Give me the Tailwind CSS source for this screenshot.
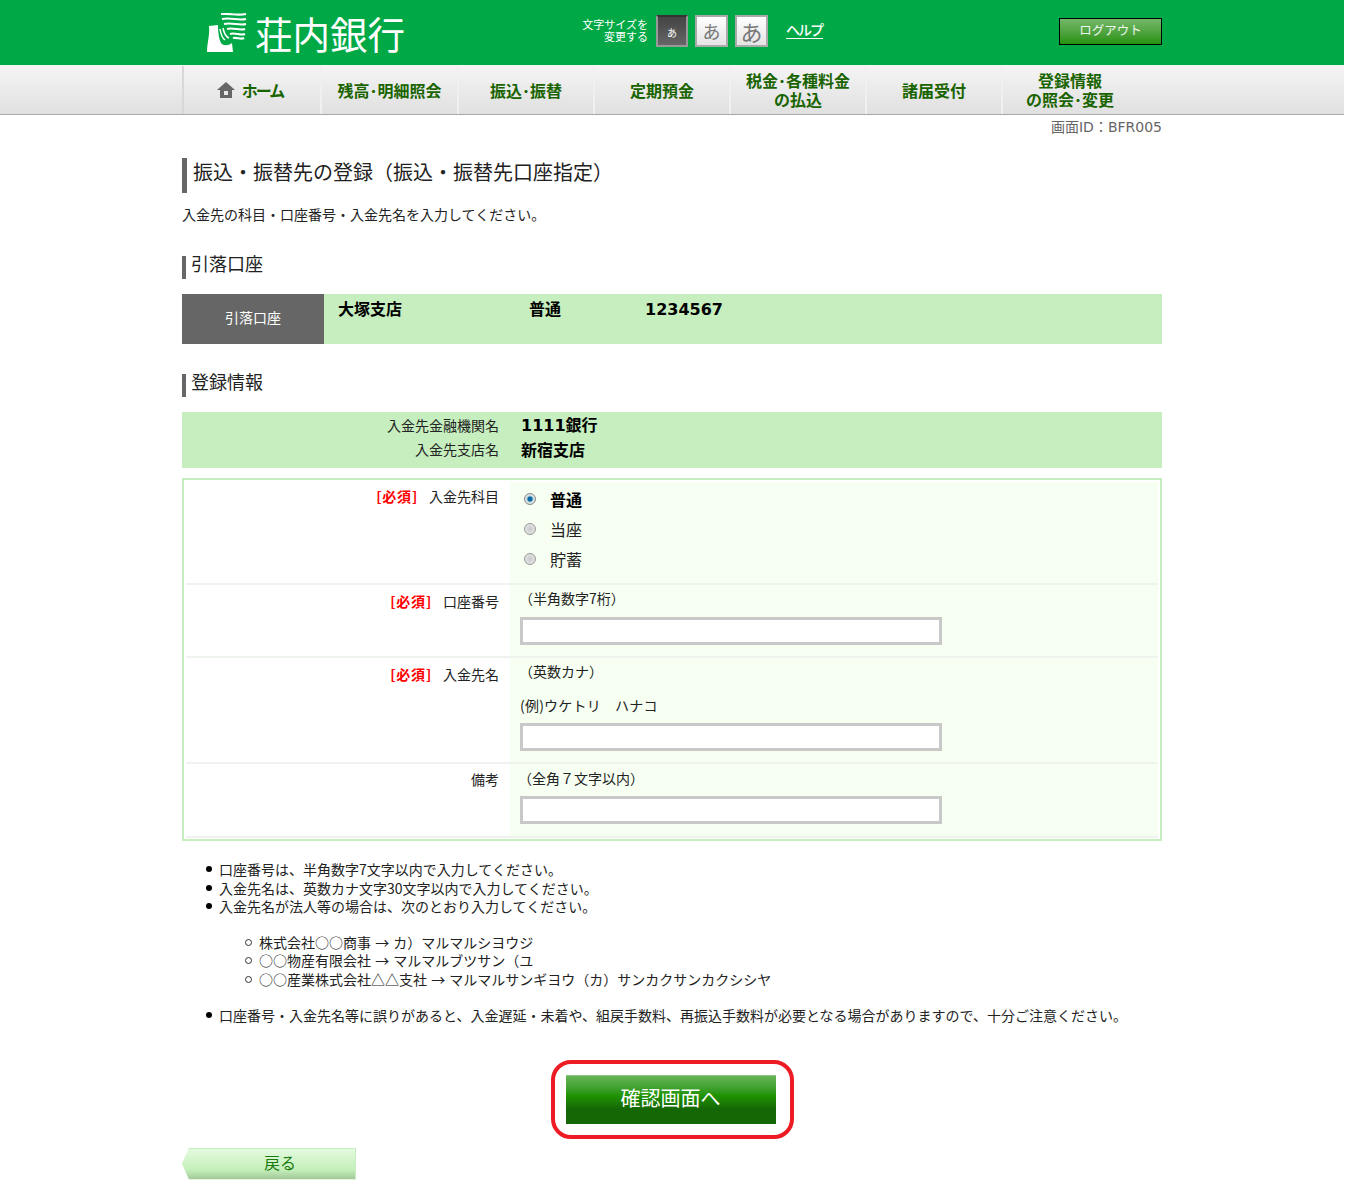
<!DOCTYPE html>
<html lang="ja">
<head>
    <meta charset="UTF-8">
    <title>荘内銀行 振込・振替先の登録</title>
    <script src="https://cdn.jsdelivr.net/npm/@tailwindcss/browser@4"></script>
</head>
<body class="bg-white w-[1344px] text-[#222] font-['Noto_Sans_CJK_JP','Noto_Sans',sans-serif] text-[14px] leading-[20px]">
    <!-- ヘッダー -->
    <header class="bg-[#00a946] h-[65px]">
        <div class="w-[980px] mx-auto flex relative h-full">
            <div class="flex w-[400px] pl-[25px] pt-[13px]">
                <svg class="w-[40px] h-[40px]" viewBox="0 0 40 40" fill="none">
                    <path d="M2 13 L11 12 C11 20 12 26 14 30 C16 33 21 33 25 30 L26 39 L0 39 C0 30 3 22 2 13 Z" fill="#fff"/>
                    <g stroke="#fff" stroke-width="1.5" fill="none">
                        <path d="M13 16 C14 22 15 25 18 27"/>
                        <path d="M16 15 C17 20 19 24 22 25"/>
                    </g>
                    <g stroke="#fff" stroke-width="2.2" fill="none">
                        <path d="M14 1 C22 0 30 3 39 1"/>
                        <path d="M15 6 C24 4 31 8 39 6"/>
                        <path d="M17 11 C25 9 32 13 39 11"/>
                        <path d="M20 16 C26 14 33 18 38 16"/>
                        <path d="M23 21 C28 19 33 23 38 21"/>
                        <path d="M26 25 C30 24 34 27 37 25"/>
                    </g>
                </svg>
                <span class="ml-[8px] text-white text-[37.5px] leading-[40px] whitespace-nowrap">荘内銀行</span>
            </div>
            <div class="w-[66px] pt-[18px] text-white text-[11px] leading-[12px] text-right whitespace-nowrap">文字サイズを<br>変更する</div>
            <div class="flex items-start pt-[15px] ml-[8px]">
                <button class="w-[32px] h-[32px] border-2 border-[#999] border-t-[#333] bg-gradient-to-b from-[#444] to-[#666] text-white text-[10px] pt-[4px]">あ</button>
                <button class="w-[33px] h-[32px] ml-[7px] border-2 border-[#aaa] bg-gradient-to-b from-white to-[#e4e4e4] text-[#777] text-[18px] leading-[26px]">あ</button>
                <button class="w-[33px] h-[32px] ml-[7px] border-2 border-[#aaa] bg-gradient-to-b from-white to-[#e4e4e4] text-[#777] text-[22px] leading-[24px]">あ</button>
                <a class="ml-[18px] mt-[6px] text-white text-[14px] leading-[17px] border-b border-white font-medium tracking-[-2px] pr-[1px]">ヘルプ</a>
            </div>
            <a class="absolute right-0 top-[18px] w-[103px] h-[27px] border border-black bg-gradient-to-b from-[#74b767] to-[#249205] text-white/90 text-[12.5px] leading-[22px] text-center">ログアウト</a>
        </div>
    </header>

    <!-- ナビゲーション -->
    <nav class="h-[50px] bg-gradient-to-b from-[#f5f5f5] to-[#e0e0e0] border-b border-[#aaa]">
        <ul class="w-[980px] mx-auto flex h-full pt-[1px] text-[16px] leading-[19px] font-bold text-[#1a6400] text-center">
            <li class="w-[138px] border-l-2 border-[#d8d8d8] flex items-center justify-center gap-[7px]">
                <svg class="w-[18px] h-[16px]" viewBox="0 0 18 16" fill="#666"><path d="M9 0 L18 8 L15 8 L15 16 L3 16 L3 8 L0 8 Z M7 9 L7 13 L11 13 L11 9 Z" fill-rule="evenodd"/></svg>
                <span class="tracking-[-2px] pr-[4px]">ホーム</span>
            </li>
            <li class="w-[137px] border-l-2 border-[#f0f0f0] flex items-center justify-center">残高･明細照会</li>
            <li class="w-[136px] border-l-2 border-[#f0f0f0] flex items-center justify-center">振込･振替</li>
            <li class="w-[136px] border-l-2 border-[#f0f0f0] flex items-center justify-center">定期預金</li>
            <li class="w-[136px] border-l-2 border-[#f0f0f0] flex items-center justify-center">税金･各種料金<br>の払込</li>
            <li class="w-[136px] border-l-2 border-[#f0f0f0] flex items-center justify-center">諸届受付</li>
            <li class="w-[136px] border-l-2 border-[#f0f0f0] flex items-center justify-center">登録情報<br>の照会･変更</li>
        </ul>
    </nav>

    <main class="w-[980px] mx-auto">
        <p class="mt-[4px] h-[16px] leading-[15px] text-right text-[#666] text-[14px]">画面<span class="font-['DejaVu_Sans']">ID</span>：<span class="font-['DejaVu_Sans']">BFR005</span></p>

        <h1 class="mt-[23px] h-[35px] border-l-[5px] border-[#666] pl-[6px] text-[20px] leading-[27px] font-normal">振込・振替先の登録（振込・振替先口座指定）</h1>
        <p class="mt-[12px] h-[20px] leading-[18px]">入金先の科目・口座番号・入金先名を入力してください。</p>

        <h2 class="mt-[31px] h-[23px] border-l-4 border-[#666] pl-[5px] text-[18px] leading-[15px]">引落口座</h2>
        <div class="mt-[15px] h-[50px] flex bg-[#c6eebe]">
            <div class="w-[142px] bg-[#666] text-white text-[14px] leading-[46px] text-center">引落口座</div>
            <div class="flex pl-[14px] pt-[4px] text-[16px] leading-[20px] font-bold text-black">
                <span class="w-[191px]">大塚支店</span>
                <span class="w-[116px]">普通</span>
                <span class="font-['DejaVu_Sans'] mt-[2px]">1234567</span>
            </div>
        </div>

        <h2 class="mt-[30px] h-[23px] border-l-4 border-[#666] pl-[5px] text-[18px] leading-[15px]">登録情報</h2>
        <div class="mt-[15px] h-[56px] bg-[#c6eebe]">
            <div class="flex h-[25px] items-center">
                <span class="w-[317px] text-right">入金先金融機関名</span>
                <span class="ml-[22px] text-[16px] font-bold text-black"><span class="font-['DejaVu_Sans']">1111</span>銀行</span>
            </div>
            <div class="flex h-[23px] items-center">
                <span class="w-[317px] text-right">入金先支店名</span>
                <span class="ml-[22px] text-[16px] font-bold text-black">新宿支店</span>
            </div>
        </div>

        <!-- 入力フォーム -->
        <form class="mt-[10px] h-[363px] border-2 border-[#c6eebe] px-[2px] pt-[2px]">
            <div class="flex h-[103px] border-b-2 border-[#eef3ee]">
                <div class="w-[313px] text-right pt-[4px]"><span class="text-[#f00] font-bold tracking-[0.8px]">[必須]</span><span class="ml-[11px]">入金先科目</span></div>
                <div class="ml-[11px] flex-1 bg-[#f6fff2] pl-[14px] pt-[2px] text-[16px] leading-[30px]">
                    <label class="flex items-center h-[30px]"><input type="radio" name="kamoku" checked class="appearance-none w-[12px] h-[12px] rounded-full border border-[#888] bg-[radial-gradient(circle,#0b6aa5_0,#0b6aa5_30%,#cdd_45%,#eee_100%)]"><span class="ml-[14px] -mt-px font-bold text-black">普通</span></label>
                    <label class="flex items-center h-[30px]"><input type="radio" name="kamoku" class="appearance-none w-[12px] h-[12px] rounded-full border border-[#999] bg-[radial-gradient(circle,#c8c8c8_0,#eee_100%)]"><span class="ml-[14px] -mt-px">当座</span></label>
                    <label class="flex items-center h-[30px]"><input type="radio" name="kamoku" class="appearance-none w-[12px] h-[12px] rounded-full border border-[#999] bg-[radial-gradient(circle,#c8c8c8_0,#eee_100%)]"><span class="ml-[14px] -mt-px">貯蓄</span></label>
                </div>
            </div>
            <div class="flex h-[73px] border-b-2 border-[#eef3ee]">
                <div class="w-[313px] text-right pt-[6px]"><span class="text-[#f00] font-bold tracking-[0.8px]">[必須]</span><span class="ml-[11px]">口座番号</span></div>
                <div class="ml-[11px] flex-1 bg-[#f6fff2] pl-[10px] pt-[3px]">
                    <p class="-ml-px">（半角数字7桁）</p>
                    <input type="text" class="block mt-[9px] w-[422px] h-[28px] border-[3px] border-[#c8c8c8] bg-white">
                </div>
            </div>
            <div class="flex h-[106px] border-b-2 border-[#eef3ee]">
                <div class="w-[313px] text-right pt-[6px]"><span class="text-[#f00] font-bold tracking-[0.8px]">[必須]</span><span class="ml-[11px]">入金先名</span></div>
                <div class="ml-[11px] flex-1 bg-[#f6fff2] pl-[10px] pt-[3px]">
                    <p class="-ml-px">（英数カナ）</p>
                    <p class="mt-[14px] tracking-[0.2px]">(例)ウケトリ　ハナコ</p>
                    <input type="text" class="block mt-[8px] w-[422px] h-[28px] border-[3px] border-[#c8c8c8] bg-white">
                </div>
            </div>
            <div class="flex h-[74px] border-b-2 border-[#eef3ee]">
                <div class="w-[313px] text-right pt-[5px]">備考</div>
                <div class="ml-[11px] flex-1 bg-[#f6fff2] pl-[10px] pt-[4px]">
                    <p class="-ml-[2px]">（全角７文字以内）</p>
                    <input type="text" class="block mt-[8px] w-[422px] h-[28px] border-[3px] border-[#c8c8c8] bg-white">
                </div>
            </div>
        </form>

        <!-- 注意事項 -->
        <ul class="mt-[19px] pl-[37px] leading-[18.5px]">
            <li class="relative before:absolute before:left-[-13px] before:top-[6px] before:w-[6px] before:h-[6px] before:rounded-full before:bg-black">口座番号は、半角数字7文字以内で入力してください。</li>
            <li class="relative before:absolute before:left-[-13px] before:top-[6px] before:w-[6px] before:h-[6px] before:rounded-full before:bg-black">入金先名は、英数カナ文字30文字以内で入力してください。</li>
            <li class="relative before:absolute before:left-[-13px] before:top-[6px] before:w-[6px] before:h-[6px] before:rounded-full before:bg-black">入金先名が法人等の場合は、次のとおり入力してください。
                <ul class="mt-[17px] mb-[18px] pl-[40px]">
                    <li class="relative before:absolute before:left-[-14px] before:top-[6px] before:w-[7px] before:h-[7px] before:rounded-full before:border before:border-[#333]">株式会社○○商事 <span class="mx-[1px]">→</span> カ）マルマルシヨウジ</li>
                    <li class="relative before:absolute before:left-[-14px] before:top-[6px] before:w-[7px] before:h-[7px] before:rounded-full before:border before:border-[#333]">○○物産有限会社 <span class="mx-[1px]">→</span> マルマルブツサン（ユ</li>
                    <li class="relative before:absolute before:left-[-14px] before:top-[6px] before:w-[7px] before:h-[7px] before:rounded-full before:border before:border-[#333]">○○産業株式会社△△支社 <span class="mx-[1px]">→</span> マルマルサンギヨウ（カ）サンカクサンカクシシヤ</li>
                </ul>
            </li>
            <li class="relative before:absolute before:left-[-13px] before:top-[6px] before:w-[6px] before:h-[6px] before:rounded-full before:bg-black">口座番号・入金先名等に誤りがあると、入金遅延・未着や、組戻手数料、再振込手数料が必要となる場合がありますので、十分ご注意ください。</li>
        </ul>

        <div class="mt-[35px] flex justify-center">
            <div class="border-4 border-[#ed1c24] rounded-[20px] pl-[11px] pr-[14px] py-[11px]">
                <button class="block w-[210px] h-[49px] pb-[4px] border-t border-[#8cc583] bg-gradient-to-b from-[#66b556] via-[#1f9400] via-40% to-[#156605] to-70% text-white text-[20px]">確認画面へ</button>
            </div>
        </div>

        <button class="block mt-[9px] w-[174px] h-[32px] pl-[22px] pb-[4px] border border-[#c6eebe] [clip-path:polygon(4%_0,100%_0,100%_100%,4%_100%,0_50%)] bg-gradient-to-b from-[#e4fadf] via-[#c3efb9] via-70% to-[#a4c99c] text-[#1b7a0e] text-[16px]">戻る</button>
    </main>
</body>
</html>
